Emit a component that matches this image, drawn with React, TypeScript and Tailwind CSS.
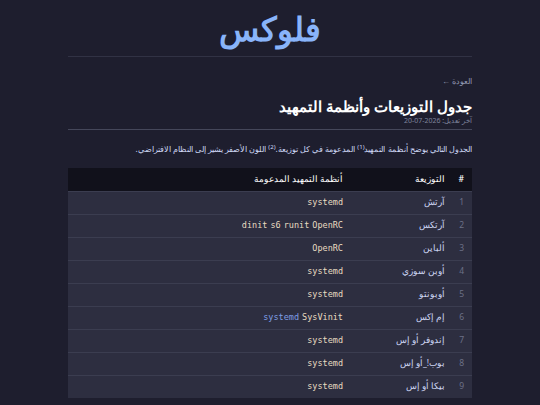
import React from "react";

type Row = {
  name: string;
  inits: { label: string; tone?: "blue" }[];
};

// Distro rows shown in the table
const rows: Row[] = [
  { name: "آرتش", inits: [{ label: "systemd" }] },
  {
    name: "آرتكس",
    inits: [
      { label: "dinit" },
      { label: "s6" },
      { label: "runit" },
      { label: "OpenRC" },
    ],
  },
  { name: "ألباين", inits: [{ label: "OpenRC" }] },
  { name: "أوبن سوزي", inits: [{ label: "systemd" }] },
  { name: "أوبونتو", inits: [{ label: "systemd" }] },
  {
    name: "إم إكس",
    inits: [{ label: "systemd", tone: "blue" }, { label: "SysVinit" }],
  },
  { name: "إندوفر أو إس", inits: [{ label: "systemd" }] },
  { name: "بوب!_أو إس", inits: [{ label: "systemd" }] },
  { name: "بيكا أو إس", inits: [{ label: "systemd" }] },
];

const App = () => {
  return (
    <div
      dir="rtl"
      className="min-h-screen bg-[#1e1e2e] text-[#cdd6f4]"
      style={{ fontFamily: '"Noto Sans", sans-serif' }}
    >
      <div className="mx-auto w-[404px]">
        {/* Site header */}
        <header className="border-b border-[#313244] pt-[10px] pb-[8px] text-center">
          <div className="text-[33px] font-bold leading-[38px] text-[#89b4fa]">فلوكس</div>
        </header>

        <main className="pt-[18px]">
          <a className="block text-[8px] leading-[12px] text-[#9399b2]">العودة ←</a>
          <h1 className="mt-[9px] text-[15px] font-bold leading-[20px] text-white">
            جدول التوزيعات وأنظمة التمهيد
          </h1>
          <div className="border-b border-[#45475a] pb-[3px] text-[7px] leading-[10px] text-[#7f849c]">
            آخر تعديل: <span dir="ltr">20-07-2026</span>
          </div>

          <p className="mt-[11px] text-[8.2px] leading-[16px] text-[#cdd6f4]">
            الجدول التالي يوضح أنظمة التمهيد<sup>(1)</sup> المدعومة في كل توزيعة.
            <sup>(2)</sup> اللون الأصفر يشير إلى النظام الافتراضي.
          </p>

          {/* Distro table */}
          <table className="mt-[11px] w-full border-collapse text-[8.5px]">
            <thead>
              <tr className="h-[23px] bg-[#11111b] text-white">
                <th className="w-[20px] pr-[8px] text-right font-medium">#</th>
                <th className="w-[101px] pr-[7px] text-right font-medium">التوزيعة</th>
                <th className="pr-[8px] text-right font-medium">أنظمة التمهيد المدعومة</th>
              </tr>
            </thead>
            <tbody>
              {rows.map((row, i) => (
                <tr key={i} className="h-[23px] border-t border-[#3b3d50] bg-[#2d2e40]">
                  <td className="pr-[8px] text-right text-[#6c7086]">{i + 1}</td>
                  <td className="pr-[7px] text-right text-[#cdd6f4]">{row.name}</td>
                  <td
                    className="pr-[8px] text-right"
                    style={{ fontFamily: '"DejaVu Sans Mono", monospace' }}
                  >
                    <span dir="ltr" className="inline-flex gap-[3px] text-[8.5px]">
                      {row.inits.map((init, j) => (
                        <span
                          key={j}
                          className={init.tone === "blue" ? "text-[#7f9ee6]" : "text-[#e8dcc0]"}
                        >
                          {init.label}
                        </span>
                      ))}
                    </span>
                  </td>
                </tr>
              ))}
            </tbody>
          </table>
        </main>
      </div>
    </div>
  );
};

export default App;
